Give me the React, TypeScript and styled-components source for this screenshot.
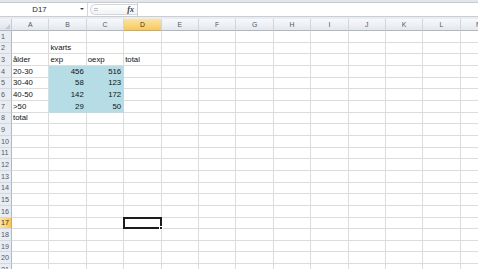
import React from "react";
import styled, { createGlobalStyle, css } from "styled-components";

const GlobalStyle = createGlobalStyle`
	html, body {
		margin: 0;
		padding: 0;
		background: #ffffff;
		overflow: hidden;
	}
	body {
		width: 478px;
		height: 269px;
		font-family: "Liberation Sans", Arial, sans-serif;
	}
`;

const COL_W = 37.4;
const ROW_H = 11.66;
const HEAD_W = 12;
const COLS = ["A", "B", "C", "D", "E", "F", "G", "H", "I", "J", "K", "L", "M"];
const ROWS = 21;

type Cell = { text: string; num?: boolean; fill?: boolean };

const data: Record<string, Cell> = {
	B2: { text: "kvarts" },
	A3: { text: "ålder" },
	B3: { text: "exp" },
	C3: { text: "oexp" },
	D3: { text: "total" },
	A4: { text: "20-30" },
	A5: { text: "30-40" },
	A6: { text: "40-50" },
	A7: { text: ">50" },
	A8: { text: "total" },
	B4: { text: "456", num: true, fill: true },
	C4: { text: "516", num: true, fill: true },
	B5: { text: "58", num: true, fill: true },
	C5: { text: "123", num: true, fill: true },
	B6: { text: "142", num: true, fill: true },
	C6: { text: "172", num: true, fill: true },
	B7: { text: "29", num: true, fill: true },
	C7: { text: "50", num: true, fill: true },
};

const Page = styled.div`
	display: flex;
	flex-direction: column;
	width: 478px;
	height: 269px;
	overflow: hidden;
	background: #ffffff;

	& > * {
		flex-shrink: 0;
	}
`;

const RibbonEdge = styled.div`
	height: 2px;
	background: #e3e7ec;
	border-bottom: 1px solid #c5cbd3;
`;

const FormulaBar = styled.div`
	display: flex;
	height: 13px;
	background: #ffffff;
	border-bottom: 1px solid #c9ced6;
`;

const NameBox = styled.div`
	position: relative;
	width: 88px;
	display: flex;
	align-items: center;
	justify-content: center;
	padding-right: 8px;
	font-size: 7.8px;
	color: #1e1e1e;
	border-right: 1px solid #d4d8de;
	box-sizing: border-box;
`;

const DropArrow = styled.span`
	position: absolute;
	right: 3px;
	top: 5px;
	width: 0;
	height: 0;
	border-left: 2px solid transparent;
	border-right: 2px solid transparent;
	border-top: 2px solid #444;
`;

const FxArea = styled.div`
	width: 50px;
	display: flex;
	align-items: center;
	padding-left: 2px;
	box-sizing: border-box;
	border-right: 1px solid #c9ced6;
`;

const Pill = styled.div`
	flex: 1;
	height: 11px;
	display: flex;
	align-items: center;
	justify-content: space-between;
	border: 1px solid #d2d6dc;
	border-right: none;
	border-radius: 6px 0 0 6px;
	background: linear-gradient(#ffffff, #f1f3f6);
	padding: 0 3px 0 3px;
	box-sizing: border-box;
`;

const Handle = styled.span`
	width: 4px;
	height: 3px;
	border-top: 1px solid #c0c5cc;
	border-bottom: 1px solid #c0c5cc;
	box-sizing: border-box;
`;

const Fx = styled.span`
	font-family: "Liberation Serif", serif;
	font-style: italic;
	font-weight: bold;
	font-size: 8px;
	color: #3a3a3a;
`;

const FormulaInput = styled.div`
	flex: 1;
`;

const Gap = styled.div`
	height: 2px;
	background: #e9ecf0;
`;

const Grid = styled.div`
	display: grid;
	grid-template-columns: ${HEAD_W}px repeat(${COLS.length}, ${COL_W}px);
	grid-template-rows: 12px;
	grid-auto-rows: ${ROW_H}px;
	font-size: 7.8px;
	color: #111;
`;

const headerBase = css<{ $active?: boolean }>`
	box-sizing: border-box;
	display: flex;
	align-items: center;
	font-size: 6.8px;
	color: ${(p) => (p.$active ? "#3c3010" : "#4c5a70")};
	background: ${(p) =>
		p.$active
			? "linear-gradient(#fbe3a6, #f5c95f)"
			: "linear-gradient(#f7f9fb, #e4e8ee)"};
`;

const Corner = styled.div`
	position: relative;
	box-sizing: border-box;
	background: linear-gradient(#f2f4f7, #dfe3e9);
	border-right: 1px solid #c6ccd4;
	border-bottom: 1px solid #aeb9c6;

	&::after {
		content: "";
		position: absolute;
		right: 1px;
		bottom: 1px;
		border-left: 5px solid transparent;
		border-bottom: 5px solid #c4cad2;
	}
`;

const ColHead = styled.div<{ $active?: boolean }>`
	${headerBase};
	justify-content: center;
	border-right: 1px solid #d0d6de;
	border-bottom: 1px solid ${(p) => (p.$active ? "#e0a83a" : "#aeb9c6")};
`;

const RowHead = styled.div<{ $active?: boolean }>`
	${headerBase};
	justify-content: flex-start;
	padding-left: 1px;
	font-size: 7.2px;
	background: ${(p) => (p.$active ? "linear-gradient(90deg, #fbe3a6, #f5c95f)" : "#e9edf2")};
	border-right: 1px solid ${(p) => (p.$active ? "#e0a83a" : "#aeb9c6")};
	border-bottom: 1px solid #d3d9e0;
`;

const CellBox = styled.div<{ $num?: boolean; $fill?: boolean }>`
	position: relative;
	box-sizing: border-box;
	display: flex;
	align-items: flex-end;
	justify-content: ${(p) => (p.$num ? "flex-end" : "flex-start")};
	padding: 0 2px 0 1px;
	line-height: 10px;
	white-space: nowrap;
	background: ${(p) => (p.$fill ? "#b6dde6" : "#ffffff")};
	border-right: 1px solid ${(p) => (p.$fill ? "#b6dde6" : "#dcdcdc")};
	border-bottom: 1px solid ${(p) => (p.$fill ? "#b6dde6" : "#dcdcdc")};
`;

const Selection = styled.div`
	position: absolute;
	left: -1px;
	top: -1px;
	right: -1px;
	bottom: -1px;
	border: 2px solid #1c1c1c;
	z-index: 2;

	&::after {
		content: "";
		position: absolute;
		right: -3px;
		bottom: -3px;
		width: 4px;
		height: 4px;
		background: #1c1c1c;
		border: 1px solid #ffffff;
		box-sizing: border-box;
	}
`;

const SELECTED = { col: "D", row: 17 };

export default function App() {
	const rows = Array.from({ length: ROWS }, (_, i) => i + 1);

	return (
		<Page>
			<GlobalStyle />
			<RibbonEdge />
			<FormulaBar>
				<NameBox>
					D17
					<DropArrow />
				</NameBox>
				<FxArea>
					<Pill>
						<Handle />
						<Fx>fx</Fx>
					</Pill>
				</FxArea>
				<FormulaInput />
			</FormulaBar>
			<Gap />
			<Grid>
				<Corner />
				{COLS.map((c) => (
					<ColHead key={c} $active={c === SELECTED.col}>
						{c}
					</ColHead>
				))}
				{rows.map((r) => (
					<React.Fragment key={r}>
						<RowHead $active={r === SELECTED.row}>{r}</RowHead>
						{COLS.map((c) => {
							const cell = data[`${c}${r}`];
							const selected = c === SELECTED.col && r === SELECTED.row;
							return (
								<CellBox key={c} $num={cell?.num} $fill={cell?.fill}>
									{cell?.text}
									{selected && <Selection />}
								</CellBox>
							);
						})}
					</React.Fragment>
				))}
			</Grid>
		</Page>
	);
}
